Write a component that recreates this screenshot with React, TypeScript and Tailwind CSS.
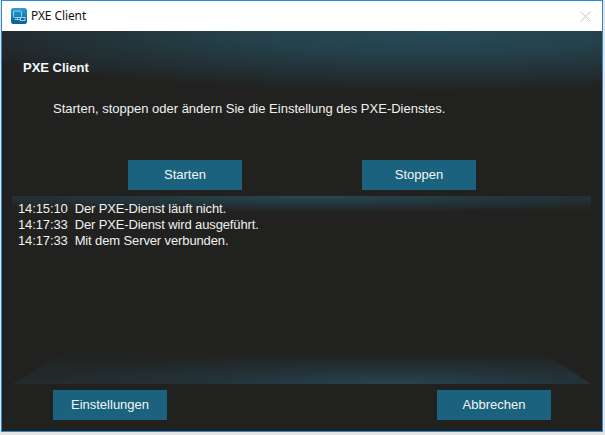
export default function App() {
  const sans = "font-['Liberation_Sans',Arial,sans-serif]"
  const btn = `w-[114px] h-[30px] bg-[#1a627d] text-[#f2f6f8] text-[13px] ${sans}`

  return (
    <div className="w-[605px] h-[435px] bg-[#e4e4e4] overflow-hidden">
      <div className="ml-px w-[602px] h-[432px] border border-[#2b88d8] flex flex-col">
        {/* titlebar */}
        <div className="h-[30px] shrink-0 bg-white flex items-center pl-[9px] pr-[11px]">
          <svg width="16" height="16" viewBox="0 0 16 16" className="shrink-0">
            <defs>
              <linearGradient id="ic" x1="0" y1="0" x2="0" y2="1">
                <stop offset="0" stopColor="#2a9fd6" />
                <stop offset="1" stopColor="#0b5f92" />
              </linearGradient>
            </defs>
            <rect width="16" height="16" rx="2.5" fill="url(#ic)" />
            <rect x="2.5" y="3" width="8" height="6.5" rx="1" fill="none" stroke="#8fd0ea" strokeWidth="1" />
            <path d="M4 11.5h5M6.5 9.5v2" stroke="#8fd0ea" strokeWidth="1" fill="none" />
            <rect x="9.5" y="9.5" width="4.5" height="3" fill="#0f6a9c" stroke="#c4e8f6" strokeWidth="0.8" />
          </svg>
          <span className="ml-[4px] text-[12px] tracking-[-0.1px] text-[#111] font-['Noto_Sans',sans-serif]">PXE Client</span>
          <svg width="11" height="11" viewBox="0 0 11 11" className="ml-auto">
            <path d="M0.5 0.5l10 10M10.5 0.5l-10 10" stroke="#c4c4c4" strokeWidth="1" fill="none" />
          </svg>
        </div>

        {/* body */}
        <div className={`flex-1 flex flex-col bg-[#212220] text-white ${sans}`}>
          <div className="h-[165px] shrink-0 flex flex-col bg-[radial-gradient(ellipse_520px_60px_at_430px_0px,#264a57_0%,#25424c_35%,#222a2d_85%,#212220_100%)]">
            <h1 className="mt-[30px] ml-[21px] text-[13px] leading-[14px] font-bold text-[#f4f8fa]">PXE Client</h1>
            <p className="mt-[27px] ml-[51px] text-[13px] leading-[14px] text-[#f0f0f0]">
              Starten, stoppen oder ändern Sie die Einstellung des PXE-Dienstes.
            </p>
            <div className="mt-[44px] ml-[126px] flex gap-[120px]">
              <button className={btn}>Starten</button>
              <button className={btn}>Stoppen</button>
            </div>
          </div>

          <div className="ml-[10px] w-[579px] h-[154px] shrink-0 relative pl-[6px] pt-[5px] text-[13px] leading-[16px] tracking-[-0.12px] text-[#f0f0f0]">
            <div className="absolute left-0 right-0 top-0 h-[17px] bg-[radial-gradient(ellipse_400px_16px_at_300px_0px,rgba(39,72,84,1)_0%,rgba(36,58,66,0.7)_50%,rgba(33,34,32,0)_100%),linear-gradient(to_bottom,#222a2c,#212220)]" />
            <div className="relative">
              <div>14:15:10&nbsp;&nbsp;Der PXE-Dienst läuft nicht.</div>
              <div>14:17:33&nbsp;&nbsp;Der PXE-Dienst wird ausgeführt.</div>
              <div>14:17:33&nbsp;&nbsp;Mit dem Server verbunden.</div>
            </div>
          </div>

          {/* bottom glow */}
          <div className="ml-[11px] w-[578px] h-[34px] shrink-0 [clip-path:polygon(0_100%,9%_0,91%_0,100%_100%)] bg-[radial-gradient(ellipse_360px_29px_at_380px_100%,rgba(38,68,80,1)_0%,rgba(36,54,62,0.7)_50%,rgba(33,34,32,0)_100%),linear-gradient(to_top,#232b2d,#212220)]" />

          <div className="mt-[6px] mx-[51px] flex justify-between">
            <button className={btn}>Einstellungen</button>
            <button className={btn}>Abbrechen</button>
          </div>
        </div>
      </div>
    </div>
  )
}
